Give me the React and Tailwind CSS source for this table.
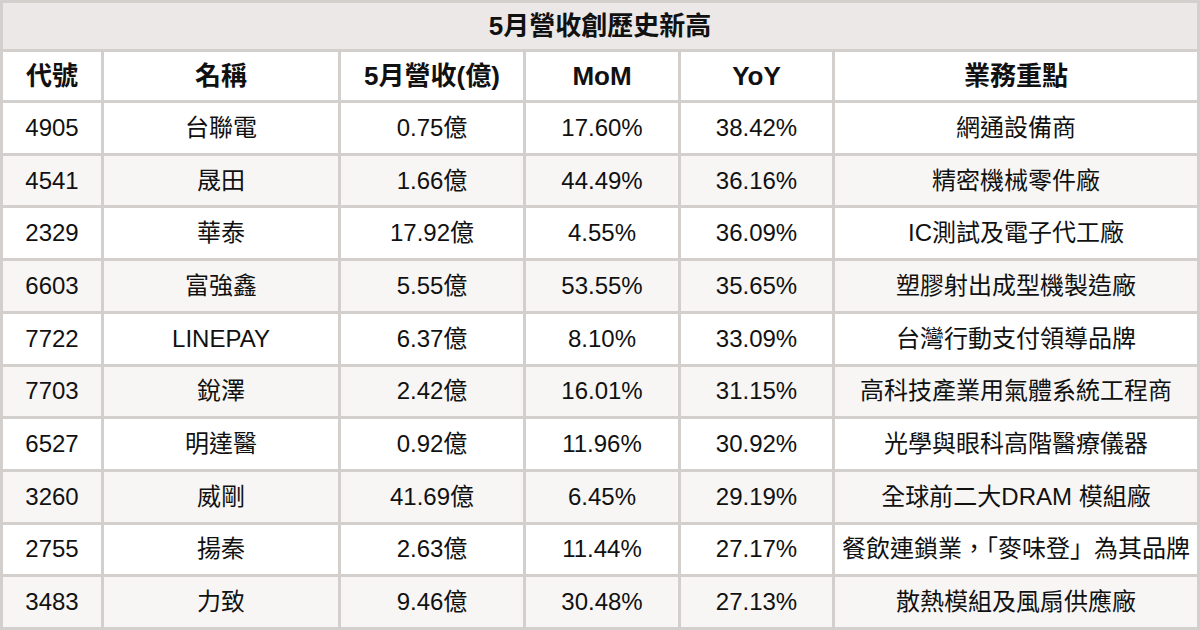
import React from "react";

// ---------------------------------------------------------------------------
// Revenue table — 5月營收創歷史新高
// ---------------------------------------------------------------------------

const columns = ["代號", "名稱", "5月營收(億)", "MoM", "YoY", "業務重點"];

const rows = [
  ["4905", "台聯電", "0.75億", "17.60%", "38.42%", "網通設備商"],
  ["4541", "晟田", "1.66億", "44.49%", "36.16%", "精密機械零件廠"],
  ["2329", "華泰", "17.92億", "4.55%", "36.09%", "IC測試及電子代工廠"],
  ["6603", "富強鑫", "5.55億", "53.55%", "35.65%", "塑膠射出成型機製造廠"],
  ["7722", "LINEPAY", "6.37億", "8.10%", "33.09%", "台灣行動支付領導品牌"],
  ["7703", "銳澤", "2.42億", "16.01%", "31.15%", "高科技產業用氣體系統工程商"],
  ["6527", "明達醫", "0.92億", "11.96%", "30.92%", "光學與眼科高階醫療儀器"],
  ["3260", "威剛", "41.69億", "6.45%", "29.19%", "全球前二大DRAM 模組廠"],
  ["2755", "揚秦", "2.63億", "11.44%", "27.17%", "餐飲連鎖業，「麥味登」為其品牌"],
  ["3483", "力致", "9.46億", "30.48%", "27.13%", "散熱模組及風扇供應廠"],
];

export default function App() {
  return (
    <div
      className="w-[1200px] h-[630px] bg-[#d3cfcd] p-[3px] grid gap-[3px] grid-cols-[98px_234px_182px_152px_151px_362px] grid-rows-[46px_48px_repeat(10,1fr)] text-[#111] text-[24px]"
      style={{ fontFamily: '"Liberation Sans", Arial, "Noto Sans CJK TC", sans-serif' }}
    >
      {/* Title */}
      <div className="col-span-6 bg-[#ece8e7] flex items-center justify-center font-bold text-[26px]">
        5月營收創歷史新高
      </div>

      {/* Header */}
      {columns.map((c) => (
        <div key={c} className="bg-white flex items-center justify-center font-bold text-[26px]">
          {c}
        </div>
      ))}

      {/* Body */}
      {rows.map((row, i) =>
        row.map((cell, j) => (
          <div
            key={`${i}-${j}`}
            className={`flex items-center justify-center whitespace-nowrap ${
              i % 2 === 0 ? "bg-white" : "bg-[#f7f6f5]"
            }`}
          >
            {cell}
          </div>
        )),
      )}
    </div>
  );
}
